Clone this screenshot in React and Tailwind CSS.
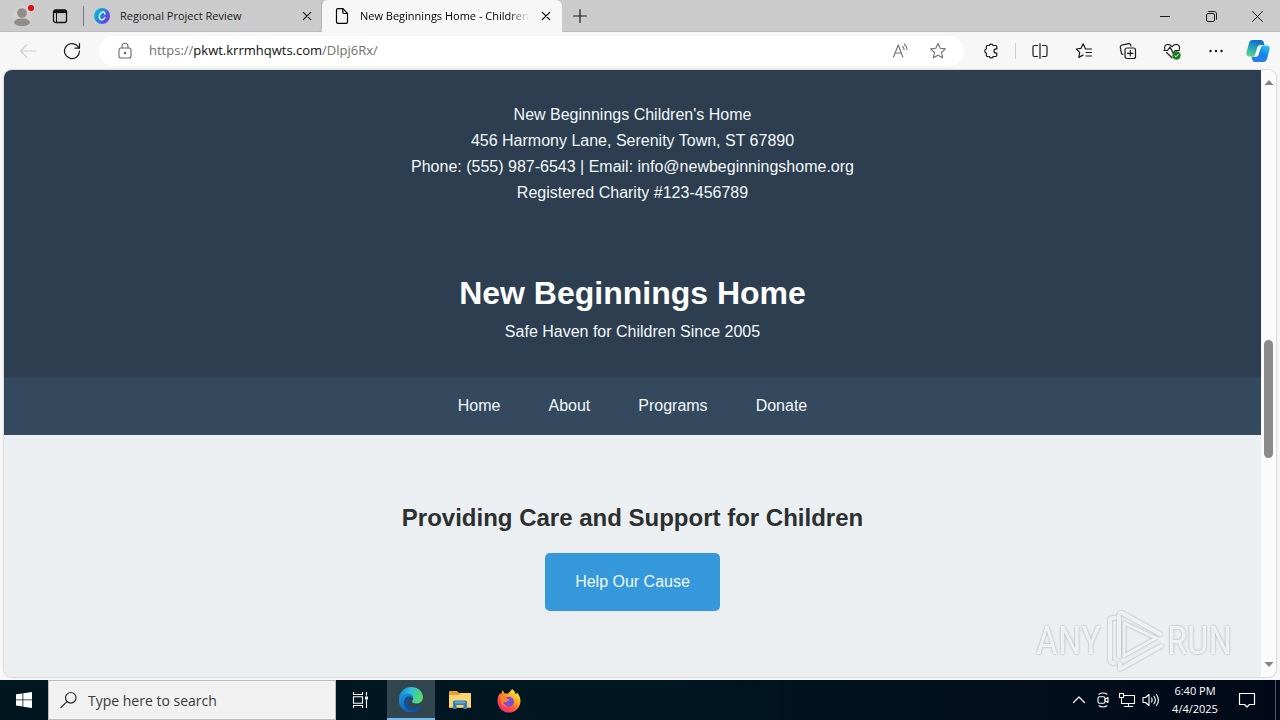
import React from "react";

const navLinks = ["Home", "About", "Programs", "Donate"];

const contactLines = [
  "New Beginnings Children's Home",
  "456 Harmony Lane, Serenity Town, ST 67890",
  "Phone: (555) 987-6543 | Email: info@newbeginningshome.org",
  "Registered Charity #123-456789",
];

function Icon({ size = 18, width = 1, className = "", children }) {
  return (
    <svg
      width={size}
      height={size}
      viewBox={`0 0 ${size} ${size}`}
      fill="none"
      stroke="currentColor"
      strokeWidth={width}
      strokeLinecap="round"
      strokeLinejoin="round"
      className={`shrink-0 ${className}`}
      aria-hidden="true"
    >
      {children}
    </svg>
  );
}

function CloseIcon() {
  return (
    <Icon size={10} width={1.2}>
      <path d="M1.300 1.300l7.400 7.400M8.700 1.300L1.300 8.700" />
    </Icon>
  );
}

const starPath =
  "M9 1.500l2.200 4.800 5.200.6-3.900 3.600 1.100 5.300L9 13.200l-4.600 2.600 1.100-5.300L1.600 6.900l5.200-.6z";

function TabStrip() {
  return (
    <header className="flex h-8 shrink-0 items-stretch bg-[#cbcbcb] text-[#1b1b1b] shadow-[inset_0_-1px_0_#bcbcbc]">
      <button type="button" aria-label="Profile" className="flex w-11 items-center justify-center">
        <svg width="24" height="24" viewBox="0 0 24 24" aria-hidden="true">
          <circle cx="12" cy="12" r="10" fill="#d2d0ce" />
          <circle cx="12" cy="9" r="4.8" fill="#8f8c89" />
          <path d="M4 19c.4-3 3-4.400 8-4.400s7.600 1.400 8 4.400c-2 2.400-4.600 3.200-8 3.200s-6-.8-8-3.200z" fill="#8f8c89" />
          <circle cx="21" cy="4" r="3" fill="#e30b0b" />
        </svg>
      </button>
      <button type="button" aria-label="Tab actions menu" className="flex w-8 items-center justify-center">
        <svg width="16" height="16" viewBox="0 0 16 16" fill="none" stroke="#111" strokeWidth="1.300" aria-hidden="true">
          <rect x="1.500" y="2" width="13" height="12.500" rx="2" />
          <path d="M2 3.600h12" strokeWidth="3" />
          <path d="M4.500 4v10" strokeWidth="1" />
        </svg>
      </button>
      <div className="my-1.5 ml-[7px] w-px self-stretch bg-[#6f7880]" />
      <div className="flex w-[238px] items-center rounded-br-md border-r border-[#b4b4b4] pl-2.5 pr-1">
        <button type="button" className="flex min-w-0 flex-1 items-center gap-2.5 text-left">
          <svg width="16" height="16" viewBox="0 0 16 16" className="shrink-0" aria-hidden="true">
            <defs>
              <linearGradient id="siteA" x1="0" y1="0.300" x2="1" y2="0.800">
                <stop offset="0" stopColor="#08c2cf" />
                <stop offset="0.5" stopColor="#2b7be0" />
                <stop offset="1" stopColor="#7d2ae8" />
              </linearGradient>
            </defs>
            <circle cx="8" cy="8" r="8" fill="url(#siteA)" />
            <path d="M10.800 6.200c.3-1.400-.5-2.300-1.700-2.200-2.200.1-3.900 2.600-3.800 4.900.1 2 1.200 3 2.600 2.900 1.200 0 2.300-.8 2.900-2" fill="none" stroke="#fff" strokeWidth="1.300" strokeLinecap="round" />
          </svg>
          <span className="truncate text-[11px]">Regional Project Review</span>
        </button>
        <button type="button" aria-label="Close tab" className="flex size-5 items-center justify-center">
          <CloseIcon />
        </button>
      </div>
      <div className="flex w-[240px] items-center rounded-t-md bg-[#f7f7f7] pl-3 pr-1.5 text-black">
        <button type="button" className="flex min-w-0 flex-1 items-center gap-2.5 text-left">
          <Icon size={16} width={1.200}>
            <path d="M2.500 2c0-.9.500-1.400 1.400-1.400h5l4.600 4.700v8.600c0 .9-.5 1.400-1.400 1.400H3.900c-.9 0-1.400-.5-1.400-1.400z" />
            <path d="M8.800.9v3.400c0 .8.400 1.200 1.200 1.200h3.300" />
          </Icon>
          <span className="whitespace-nowrap text-[11px] [mask-image:linear-gradient(to_right,#000_88%,transparent)]">
            New Beginnings Home - Children
          </span>
        </button>
        <button type="button" aria-label="Close tab" className="ml-1 flex size-5 items-center justify-center">
          <CloseIcon />
        </button>
      </div>
      <button type="button" aria-label="New tab" className="flex w-9 items-center justify-center">
        <Icon size={14} width={1.200}>
          <path d="M7 .6v12.800M.6 7h12.800" />
        </Icon>
      </button>
      <div className="ml-auto flex">
        <button type="button" aria-label="Minimize" className="flex w-[46px] items-center justify-center">
          <Icon size={10}><path d="M0 5.500h10" /></Icon>
        </button>
        <button type="button" aria-label="Restore" className="flex w-[46px] items-center justify-center">
          <Icon size={11}>
            <rect x=".5" y="2.500" width="8" height="8" rx="1.500" />
            <path d="M2.700.5h5.600c1.300 0 2.200.9 2.200 2.200v5.600" />
          </Icon>
        </button>
        <button type="button" aria-label="Close window" className="flex w-[46px] items-center justify-center">
          <Icon size={11}><path d="M.5.5l10 10M10.500.5l-10 10" /></Icon>
        </button>
      </div>
    </header>
  );
}

function ToolButton({ label, children, className = "" }) {
  return (
    <button type="button" aria-label={label} className={`flex h-8 w-11 shrink-0 items-center justify-center ${className}`}>
      {children}
    </button>
  );
}

function CopilotIcon() {
  return (
    <svg width="24" height="24" viewBox="0 0 24 24" aria-hidden="true">
      <defs>
        <linearGradient id="copA" x1="0.600" y1="0" x2="0.300" y2="1">
          <stop offset="0" stopColor="#1566c8" />
          <stop offset="0.450" stopColor="#1e9fc4" />
          <stop offset="1" stopColor="#5ad884" />
        </linearGradient>
        <linearGradient id="copB" x1="0.800" y1="0" x2="0.300" y2="1">
          <stop offset="0" stopColor="#2fc3f7" />
          <stop offset="0.500" stopColor="#1584e2" />
          <stop offset="1" stopColor="#2f7df0" />
        </linearGradient>
      </defs>
      <path d="M6.500 1h8.400c1.600 0 2.400 1 2.900 2.600l.8 2.600h-4c-1.600 0-2.700.8-3.200 2.400l-2.100 6.600c-.5 1.500-1.300 2.300-2.900 2.300H3.300C.8 17.500-.2 15.600.5 13.200L3 4.300C3.600 2.100 4.700 1 6.500 1z" fill="url(#copA)" />
      <path d="M17.500 23H9.100c-1.600 0-2.400-1-2.900-2.600l-.8-2.600h4c1.600 0 2.700-.8 3.200-2.400l2.100-6.600c.5-1.500 1.300-2.300 2.900-2.300h3.100c2.500 0 3.500 1.900 2.800 4.300L21 19.700c-.6 2.200-1.700 3.300-3.500 3.300z" fill="url(#copB)" />
      <path d="M13.600 6.200h3.600c-1.400.2-2.200 1-2.600 2.400l-2.100 6.700c-.5 1.600-1.500 2.500-3.100 2.500H6.800c1.400-.2 2.200-1 2.600-2.400l2-6.600c.4-1.300 1-2.100 2.200-2.600z" fill="#f6fbff" />
    </svg>
  );
}

function Toolbar() {
  return (
    <div className="flex h-[38px] shrink-0 items-center bg-[#f7f7f7] pl-1.5 text-[#1b1b1b]">
      <ToolButton label="Back" className="text-[#cfcfcf]">
        <Icon width={1.100}><path d="M17 9H1.500M8 2.500L1.500 9 8 15.500" /></Icon>
      </ToolButton>
      <ToolButton label="Refresh">
        <Icon width={1.200}>
          <path d="M16.500 9a7.500 7.500 0 1 1-2.700-5.700L16.200 6" />
          <path d="M16.500 1.500V6.200H12" />
        </Icon>
      </ToolButton>
      <div className="ml-[5px] flex h-[30px] flex-1 items-center rounded-full bg-white pl-4 pr-2.5">
        <button type="button" aria-label="View site information" className="flex w-5 items-center justify-center text-[#6a6a6a]">
          <Icon width={1.100}>
            <rect x="3" y="6" width="12" height="10" rx="2" />
            <path d="M6 6V4.300a3 3 0 0 1 6 0V6" />
            <circle cx="9" cy="11" r=".7" fill="currentColor" />
          </Icon>
        </button>
        <div className="relative ml-3.5 flex-1 text-[13px] text-[#707070]">
          <span>https://</span>
          <span className="text-[#111]">pkwt.krrmhqwts.com</span>
          <span>/Dlpj6Rx/</span>
          <input type="text" aria-label="Address and search bar" className="absolute inset-0 w-full bg-transparent outline-none" />
        </div>
        <button type="button" aria-label="Read aloud" className="flex w-10 items-center justify-center text-[#707070]">
          <Icon width={1.100}>
            <path d="M.6 15L5.200 3l4.600 12M2.200 11h6" />
            <path d="M9.600 4.500c1 .9 1.500 2 1.500 3.300M11.300 2c1.700 1.500 2.600 3.400 2.700 5.500" />
          </Icon>
        </button>
        <button type="button" aria-label="Add to favorites" className="flex w-8 items-center justify-center text-[#707070]">
          <Icon width={1.100}><path d={starPath} /></Icon>
        </button>
      </div>
      <ToolButton label="Extensions" className="ml-[5px]">
        <Icon width={1.200}>
          <path d="M5.500 3.500h1.700a2.100 2.100 0 0 1 4 0h2.400c.7 0 1.200.5 1.200 1.200v2.200h-.7a2.100 2.100 0 0 0 0 4.200h.7v2.200c0 .7-.5 1.200-1.200 1.200h-2.400a2.100 2.100 0 0 1-4 0H5.500c-.7 0-1.200-.5-1.200-1.200v-2.200a2.200 2.200 0 0 1 0-4.200V4.700c0-.7.500-1.200 1.200-1.200z" />
        </Icon>
      </ToolButton>
      <div className="mx-0.5 h-4 w-px bg-[#cfcfcf]" />
      <ToolButton label="Split screen">
        <Icon width={1.200}>
          <path d="M6.500 3.500h-3C2.400 3.500 2 4 2 5v8c0 1 .4 1.500 1.500 1.500h3M11.500 3.500h3c1.100 0 1.500.5 1.500 1.500v8c0 1-.4 1.500-1.500 1.500h-3M9 1.500v15" />
        </Icon>
      </ToolButton>
      <ToolButton label="Favorites">
        <Icon width={1.200}>
          <path d="M16.500 7h-6L8.200 1.800 6 6.300l-4.800.7 3.500 3.400-.9 5L8 13.100" />
          <path d="M11 10.500h5.500M11 14h5.500" />
        </Icon>
      </ToolButton>
      <ToolButton label="Collections">
        <Icon width={1.200}>
          <rect x="6" y="6" width="10.500" height="10.500" rx="2" />
          <path d="M11.300 8.500v5.500M8.500 11.300h5.500" />
          <path d="M4 12.500c-1-.2-1.500-.8-1.700-1.700L1.300 5.200c-.2-1 .3-1.700 1.300-2l7-1.500c1-.2 1.800.3 2.100 1.300l.3 1" />
        </Icon>
      </ToolButton>
      <ToolButton label="Browser essentials">
        <Icon width={1.200}>
          <path d="M1.800 7.300C.9 4.600 2.500 2.300 4.900 2.300c1.700 0 2.900.8 4.100 2.300 1.200-1.500 2.400-2.300 4.100-2.300 2.500 0 4.100 2.300 3.200 5M3.500 10.500L9 15.800" />
          <path d="M.8 8.500h3.700L7 5l3.200 6 2-2.500h4.300" />
          <circle cx="13.500" cy="13.500" r="3.600" fill="#1b7a20" stroke="#1b7a20" />
          <path d="M11.900 13.700l1.100 1.100 2.200-2.400" stroke="#fff" strokeWidth="1" />
        </Icon>
      </ToolButton>
      <ToolButton label="Settings and more">
        <Icon>
          <g fill="currentColor" stroke="none">
            <circle cx="3.500" cy="9" r="1.200" />
            <circle cx="9" cy="9" r="1.200" />
            <circle cx="14.500" cy="9" r="1.200" />
          </g>
        </Icon>
      </ToolButton>
      <ToolButton label="Copilot" className="-ml-0.5"><CopilotIcon /></ToolButton>
    </div>
  );
}

function Watermark() {
  return (
    <div
      className="pointer-events-none absolute bottom-1 right-11 flex items-center gap-1 text-[38px] leading-none text-white/80 [filter:drop-shadow(0_0_1px_#8d9396)]"
      style={{ fontFamily: '"Roboto Condensed", Roboto, sans-serif' }}
    >
      <span>ANY</span>
      <svg width="58" height="64" viewBox="0 0 58 64" fill="none" stroke="currentColor" strokeWidth="4" strokeLinejoin="round" strokeLinecap="round" aria-hidden="true">
        <path d="M10 9H8Q5 9 5 12V50Q5 54 9 54" />
        <path d="M14 47V8Q14 2 19 5L55 25" />
        <path d="M19 14V47L51 29Z" strokeWidth="3" />
        <path d="M15 55V60L56 37" />
      </svg>
      <span>RUN</span>
    </div>
  );
}

function Site() {
  return (
    <main className="min-w-0 flex-1 overflow-hidden bg-[#ebeff2] text-base leading-[26px] text-[#f2f8fa]" style={{ fontFamily: '"Liberation Sans", Arial, sans-serif' }}>
      <address className="bg-[#2c3e50] px-8 pb-[30px] pt-8 text-center not-italic">
        {contactLines.map((line) => (
          <p key={line}>{line}</p>
        ))}
      </address>
      <section className="bg-[#2c3e50] p-8 text-center">
        <h1 className="text-[32px] font-bold leading-[51px] text-white">New Beginnings Home</h1>
        <p>Safe Haven for Children Since 2005</p>
      </section>
      <nav className="flex justify-center gap-12 bg-[#34495e] p-4">
        {navLinks.map((label) => (
          <a key={label} href="#">{label}</a>
        ))}
      </nav>
      <section className="flex flex-col items-center gap-4 px-8 py-16 text-center">
        <h2 className="text-2xl font-bold leading-[38px] text-[#2c3030]">Providing Care and Support for Children</h2>
        <a href="#" className="rounded-[5px] bg-[#3498db] px-[30px] py-4">Help Our Cause</a>
      </section>
    </main>
  );
}

function Scrollbar() {
  return (
    <div className="flex w-[15px] shrink-0 flex-col items-center bg-[#fbfbfb] py-2 text-[#858585]" aria-hidden="true">
      <svg width="10" height="9" viewBox="0 0 10 9"><path d="M5 2L9.500 7H.5z" fill="currentColor" /></svg>
      <div className="flex-[253]" />
      <div className="flex-[118] w-[9px] rounded-full bg-[#8a8a8a]" />
      <div className="flex-[202]" />
      <svg width="10" height="9" viewBox="0 0 10 9"><path d="M5 7L9.500 2H.5z" fill="currentColor" /></svg>
    </div>
  );
}

function EdgeIcon() {
  return (
    <svg width="26" height="26" viewBox="0 0 24 24" aria-hidden="true">
      <defs>
        <linearGradient id="edgeA" x1="0" y1="0.300" x2="1" y2="0.500">
          <stop offset="0" stopColor="#1686d0" />
          <stop offset="0.450" stopColor="#2cc0dc" />
          <stop offset="1" stopColor="#5fdc5c" />
        </linearGradient>
        <linearGradient id="edgeB" x1="0" y1="0" x2="0.600" y2="1">
          <stop offset="0" stopColor="#1d9be2" />
          <stop offset="1" stopColor="#0c58a8" />
        </linearGradient>
      </defs>
      <path d="M1 11C1.700 5 6.300 1 12 1c6.500 0 11 4.400 11 9.400 0 3.600-2.700 5.800-5.900 5.800-2.700 0-4.100-1-4.100-1.900 0-.7 1-1.100 1-3C14 9 11.500 7.400 8.500 7.400 5 7.400 2.200 8.800 1 11z" fill="url(#edgeA)" />
      <path d="M1 12c.4-3.400 3.400-5.300 7-5.300 3.800 0 6.200 2.300 6 4.700-1.700-1.600-5.500-.3-5.500 3.500 0 4.100 4.500 6.500 9.600 4.800 1.300-.5 2.400-.9 2.800-.5.4.3-.2 1-.7 1.500A11 11 0 0 1 1 12z" fill="url(#edgeB)" />
      <path d="M8.500 14.900c0 4.100 4.500 6.500 9.600 4.800 1.300-.5 2.400-.9 2.800-.5.4.3-.2 1-.7 1.500-3 3-7.300 2.800-10.700 1.500-5.600-3.900-4.900-9.300-1.500-12.200 1.800-1 4.800-.7 6 1.400-1.700-1.600-5.500-.3-5.500 3.500z" fill="#124f9e" />
    </svg>
  );
}

function FolderIcon() {
  return (
    <svg width="24" height="22" viewBox="0 0 24 22" aria-hidden="true">
      <path d="M1 3q0-1 1-1h7l2 2h11q1 0 1 1v14H1z" fill="#e7a22f" />
      <path d="M1 6h10l2-2h9q1 0 1 1v13H1z" fill="#f9d470" />
      <path d="M5 20v-7q0-1.500 1.500-1.500h11q1.500 0 1.500 1.500v7h-3.500v-4h-7v4z" fill="#2f80bd" />
      <path d="M7 12.500h10v2H7z" fill="#59a9dc" />
    </svg>
  );
}

function FirefoxIcon() {
  return (
    <svg width="24" height="25" viewBox="0 0 24 25" aria-hidden="true">
      <defs>
        <linearGradient id="ffA" x1="0.850" y1="0.050" x2="0.200" y2="0.950">
          <stop offset="0" stopColor="#fff04a" />
          <stop offset="0.350" stopColor="#ffad20" />
          <stop offset="0.650" stopColor="#ff553c" />
          <stop offset="1" stopColor="#ee2a79" />
        </linearGradient>
      </defs>
      <path d="M15 1c2.400 1.500 3.300 3.500 3.600 5.200l1.700-1.400c1.700 2 3.200 5 3.200 8.200a11.500 11.500 0 1 1-23 0c0-3 .8-5.700 2.600-8l.9 1.800L5.600 2l2 3.600c1.100-.3 2.500-.3 3.600.2C12.200 3.600 14.300 3 15 1z" fill="url(#ffA)" />
      <path d="M9 9.500c2.700-2 7.800-.5 8 3.800.1 3.500-2.700 5.300-5.300 5.200-3.200-.1-5.400-2.500-5.400-5.200 1 .9 2 1 3.300.4l2.300-1.300c.5-.4.5-.9-.3-1.100-1.300-.1-1.700-.7-2.600-1.800z" fill="#7650d8" />
      <path d="M3.800 9c1.200-1.300 3-1.400 4.500-.5-.2 1.800 1.200 2.500 3.200 2.600.6.200.5.800 0 1.200l-2 1.200c-1.600.8-2.500.7-3.300.3 0 2.800 2.600 4.700 5.300 4.500-4.300 1.700-8.700-2-7.700-9.300z" fill="#ff8529" />
    </svg>
  );
}

function TrayButton({ label, children }) {
  return (
    <button type="button" aria-label={label} className="flex w-6 items-center justify-center">
      {children}
    </button>
  );
}

function Taskbar() {
  return (
    <footer className="flex h-10 shrink-0 items-stretch bg-linear-to-r from-[#001720] via-[#001722] to-[#020817] text-white">
      <button type="button" aria-label="Start" className="flex w-12 items-center justify-center">
        <svg width="16" height="16" viewBox="0 0 16 16" fill="#fff" aria-hidden="true">
          <path d="M0 2.300L6.500 1.400v6.100H0zM7.300 1.300L16 0v7.500H7.300zM0 8.300h6.500v6.200L0 13.600zM7.300 8.300H16V16l-8.700-1.300z" />
        </svg>
      </button>
      <label className="flex w-72 items-center gap-2.5 border border-[#bcbcbc] bg-[#f1f1f1] pl-[11px] text-[#2b2b2b]">
        <Icon width={1.200}>
          <circle cx="10.800" cy="6.800" r="5.300" />
          <path d="M7 10.600L.9 16.700" />
        </Icon>
        <input type="search" aria-label="Type here to search" placeholder="Type here to search" className="min-w-0 flex-1 bg-transparent text-[14px] outline-none placeholder:text-[#3a3a3a]" />
      </label>
      <button type="button" aria-label="Task view" className="flex w-12 items-center justify-center">
        <svg width="17" height="16" viewBox="0 0 17 16" fill="none" stroke="#fff" strokeWidth="1.100" aria-hidden="true">
          <path d="M1.500 0v2.500h9V0M1.500 16v-2.500h9V16M1.500 4.800h9v6.400h-9zM14.500 0v3.500M14.500 8v8" />
          <path d="M13 4.500h3v3h-3z" fill="#fff" stroke="none" />
        </svg>
      </button>
      <button type="button" aria-label="Microsoft Edge" className="ml-[3px] flex w-12 items-center justify-center border-b-2 border-[#76b9ed] bg-[#31464f]">
        <EdgeIcon />
      </button>
      <button type="button" aria-label="File Explorer" className="flex w-[49px] items-center justify-center"><FolderIcon /></button>
      <button type="button" aria-label="Firefox" className="flex w-[49px] items-center justify-center"><FirefoxIcon /></button>
      <div className="ml-auto flex">
        <TrayButton label="Show hidden icons">
          <Icon size={14} width={1.200}><path d="M1.500 9.500L7 4l5.500 5.500" /></Icon>
        </TrayButton>
        <TrayButton label="Meet Now">
          <Icon size={16} width={1.100}>
            <rect x="3" y="4.700" width="7" height="6.600" rx="1.500" />
            <path d="M10 7.300l3-1.700v4.800l-3-1.700M4 2.200C6 .6 10 .6 12 2.200M4 13.800c2 1.600 6 1.600 8 0" />
          </Icon>
        </TrayButton>
        <TrayButton label="Network">
          <Icon size={18} width={1.100}>
            <path d="M5.500 4.500h11v8H3.500V7.500M10.500 12.500v3M6.500 15.500h8" />
            <path d="M1.500 2.500h4v4h-4z" />
          </Icon>
        </TrayButton>
        <TrayButton label="Volume">
          <Icon size={18} width={1.100}>
            <path d="M1 6.500h2.500L7 3.500v11l-3.500-3H1z" />
            <path d="M9.500 7c.8 1.200.8 2.800 0 4M12 5.200c1.600 2.200 1.600 5.400 0 7.600M14.500 3.500c2.300 3.300 2.300 7.700 0 11" />
          </Icon>
        </TrayButton>
        <button type="button" className="w-16 text-center text-[11px] leading-[18px]">
          <span className="block">6:40 PM</span>
          <span className="block">4/4/2025</span>
        </button>
        <button type="button" aria-label="Notifications" className="flex w-10 items-center justify-center">
          <Icon size={18} width={1.200}><path d="M1.500 2.500h15v11h-5L9 16l-2.500-2.500h-5z" /></Icon>
        </button>
        <button type="button" aria-label="Show desktop" className="ml-2 w-[5px] border-l border-[#4b5560]" />
      </div>
    </footer>
  );
}

export default function App() {
  return (
    <div className="flex h-screen flex-col overflow-hidden bg-[#f7f7f7]" style={{ fontFamily: '"Open Sans", "Noto Sans", sans-serif' }}>
      <TabStrip />
      <Toolbar />
      <div className="relative mx-1 mb-[3px] flex min-h-0 flex-1 overflow-hidden rounded-lg shadow-[0_0_2px_#9a9a9a]">
        <Site />
        <Scrollbar />
        <Watermark />
      </div>
      <Taskbar />
    </div>
  );
}
